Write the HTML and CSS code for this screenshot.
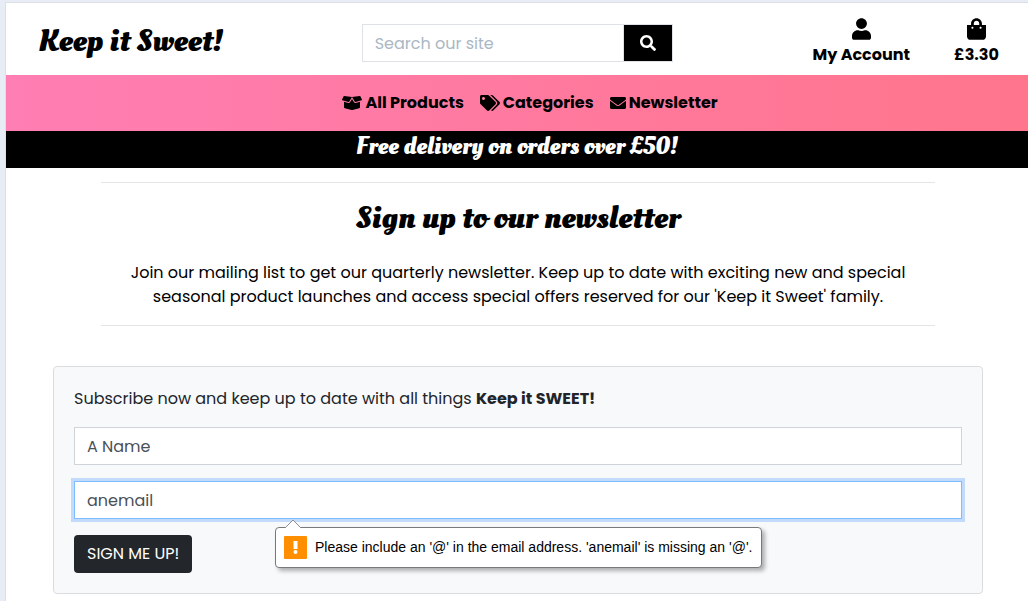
FILE: index.html
```html
<!DOCTYPE html>
<html lang="en">
<head>
<meta charset="utf-8">
<title>Keep it Sweet! - Newsletter</title>
<link rel="stylesheet" href="styles.css">
</head>
<body>
<div class="page">
  <header class="header">
    <a class="logo" href="#">Keep it Sweet!</a>
    <form class="search" role="search">
      <input class="search-input" type="text" placeholder="Search our site" aria-label="Search our site">
      <button class="search-button" type="button" aria-label="Search">
        <svg class="icon" viewBox="0 0 512 512" width="16" height="16"><path d="M505 442.7L405.3 343c-4.5-4.5-10.6-7-17-7H372c27.6-35.3 44-79.7 44-128C416 93.1 322.9 0 208 0S0 93.1 0 208s93.1 208 208 208c48.3 0 92.7-16.4 128-44v16.3c0 6.4 2.5 12.5 7 17l99.7 99.7c9.4 9.4 24.6 9.4 33.9 0l28.3-28.3c9.4-9.4 9.4-24.6.1-34zM208 336c-70.7 0-128-57.2-128-128 0-70.7 57.2-128 128-128 70.7 0 128 57.2 128 128 0 70.7-57.2 128-128 128z"/></svg>
      </button>
    </form>
    <div class="account">
      <a class="account-link" href="#">
        <svg class="icon" viewBox="0 0 448 512" width="19" height="22"><path d="M224 256c70.7 0 128-57.3 128-128S294.7 0 224 0 96 57.3 96 128s57.3 128 128 128zm89.6 32h-16.7c-22.2 10.2-46.9 16-72.9 16s-50.6-5.8-72.9-16h-16.7C60.2 288 0 348.2 0 422.4V464c0 26.5 21.5 48 48 48h352c26.5 0 48-21.5 48-48v-41.6c0-74.2-60.2-134.4-134.4-134.4z"/></svg>
        <span>My Account</span>
      </a>
      <a class="account-link" href="#">
        <svg class="icon" viewBox="0 0 448 512" width="19" height="22"><path d="M352 160v-32C352 57.42 294.579 0 224 0 153.42 0 96 57.42 96 128v32H0v272c0 44.183 35.817 80 80 80h288c44.183 0 80-35.817 80-80V160h-96zm-192-32c0-35.29 28.71-64 64-64s64 28.71 64 64v32H160v-32zm160 120c-13.255 0-24-10.745-24-24s10.745-24 24-24 24 10.745 24 24-10.745 24-24 24zm-192 0c-13.255 0-24-10.745-24-24s10.745-24 24-24 24 10.745 24 24-10.745 24-24 24z"/></svg>
        <span>£3.30</span>
      </a>
    </div>
  </header>

  <nav class="nav">
    <a class="nav-link" href="#">
      <svg class="icon" viewBox="0 0 640 512" width="20" height="16"><path d="M425.7 256c-16.9 0-32.8-9-41.4-23.4L320 126l-64.2 106.6c-8.7 14.5-24.6 23.5-41.5 23.500-4.500 0-9-.6-13.300-1.900L64 215v178c0 14.700 10 27.500 24.200 31l216.200 54.100c10.200 2.500 20.900 2.500 31 0L551.800 424c14.200-3.600 24.200-16.400 24.200-31V215l-137 39.100c-4.300 1.300-8.800 1.900-13.300 1.900zm212.600-112.200L586.800 41c-3.100-6.200-9.800-9.800-16.700-8.900L320 64l91.700 152.100c3.800 6.300 11.400 9.300 18.500 7.300l197.900-56.500c9.900-2.900 14.700-13.900 10.200-23.100zM53.200 41L1.700 143.800c-4.600 9.200.3 20.200 10.100 23l197.900 56.500c7.100 2 14.700-1 18.500-7.300L320 64 69.800 32.100c-6.900-.8-13.500 2.700-16.600 8.900z"/></svg>
      All Products
    </a>
    <a class="nav-link" href="#">
      <svg class="icon" viewBox="0 0 640 512" width="20" height="16"><path d="M497.941 225.941L286.059 14.059A48 48 0 0 0 252.118 0H48C21.49 0 0 21.49 0 48v204.118a48 48 0 0 0 14.059 33.941l211.882 211.882c18.744 18.745 49.136 18.746 67.882 0l204.118-204.118c18.745-18.745 18.745-49.137 0-67.882zM112 160c-26.51 0-48-21.49-48-48s21.49-48 48-48 48 21.49 48 48-21.49 48-48 48zm513.941 133.823L421.823 497.941c-18.745 18.745-49.137 18.745-67.882 0l-.36-.36L527.64 323.522c16.999-16.999 26.36-39.6 26.36-63.64s-9.362-46.641-26.36-63.64L331.397 0h48.721a48 48 0 0 1 33.941 14.059l211.882 211.882c18.745 18.745 18.745 49.137 0 67.882z"/></svg>
      Categories
    </a>
    <a class="nav-link" href="#">
      <svg class="icon" viewBox="0 0 512 512" width="16" height="16"><path d="M502.3 190.8c3.9-3.1 9.7-.2 9.7 4.7V400c0 26.5-21.5 48-48 48H48c-26.5 0-48-21.5-48-48V195.6c0-5 5.7-7.8 9.7-4.7 22.4 17.4 52.1 39.5 154.1 113.6 21.1 15.4 56.7 47.8 92.2 47.6 35.7.3 72-32.8 92.3-47.6 102-74.1 131.6-96.3 154-113.7zM256 320c23.2.4 56.6-29.2 73.4-41.4 132.7-96.3 142.8-104.7 173.4-128.7 5.8-4.5 9.2-11.5 9.2-18.9v-19c0-26.5-21.5-48-48-48H48c-26.5 0-48 21.5-48 48v19c0 7.4 3.4 14.3 9.2 18.9 30.6 23.9 40.7 32.4 173.4 128.7 16.8 12.2 50.2 41.8 73.4 41.4z"/></svg>
      Newsletter
    </a>
  </nav>

  <p class="banner">Free delivery on orders over £50!</p>

  <main>
    <section class="intro">
      <h1 class="title">Sign up to our newsletter</h1>
      <p class="lead">Join our mailing list to get our quarterly newsletter. Keep up to date with exciting new and special seasonal product launches and access special offers reserved for our 'Keep it Sweet' family.</p>
    </section>

    <form class="card" novalidate>
      <p class="card-text">Subscribe now and keep up to date with all things <strong>Keep it SWEET!</strong></p>
      <input class="field" type="text" value="A Name" aria-label="Name">
      <div class="email">
        <input class="field field-active" type="email" value="anemail" aria-label="Email" aria-describedby="email-hint">
        <div class="hint" id="email-hint" role="alert">
          <svg class="hint-arrow" viewBox="0 0 16 9" width="16" height="9"><path d="M0 9L8 1l8 8" fill="#fff" stroke="#8b8e92"/></svg>
          <svg class="hint-icon" viewBox="0 0 23 23" width="23" height="23"><rect width="23" height="23" rx="1" fill="#ff8f00"/><path d="M9.500 5h4v8h-4z" fill="#fff"/><circle cx="11.500" cy="16" r="2" fill="#fff"/></svg>
          <span>Please include an '@' in the email address. 'anemail' is missing an '@'.</span>
        </div>
      </div>
      <button class="submit" type="button">SIGN ME UP!</button>
    </form>
  </main>
</div>
</body>
</html>
```
FILE: styles.css
```css
* {
  box-sizing: border-box;
}

body {
  margin: 0;
  padding: 2px 0 0 5px;
  background: #e7ecf5;
  color: #000;
  font-family: Poppins, Inter, sans-serif;
  font-size: 16px;
  line-height: 24px;
}

a {
  color: inherit;
  text-decoration: none;
}

p,
h1 {
  margin: 0;
}

input,
button {
  font: inherit;
}

.icon {
  display: block;
  flex: none;
  fill: currentColor;
}

.page {
  min-height: 599px;
  border: solid #dcdfe5;
  border-width: 1px 0 0 1px;
  background: #fff;
}

.header {
  display: grid;
  grid-template-columns: repeat(3, minmax(0, 1fr));
  align-items: center;
  min-height: 72px;
}

.logo,
.banner,
.title {
  font-family: "Oleo Script", "Liberation Serif", serif;
  font-weight: 700;
}

.logo {
  padding: 4px 0 0 32px;
  font-size: 32px;
  line-height: 40px;
}

.search {
  display: flex;
  margin: 8px 14px 0 15px;
  border: 1px solid #dee2e6;
}

.search-input {
  flex: 1;
  min-width: 0;
  height: 36px;
  padding: 0 12px;
  border: 0;
  border-right: 1px solid #dee2e6;
}

.search-input::placeholder {
  color: #aab7c4;
  opacity: 1;
}

.search-button {
  display: grid;
  flex: none;
  place-items: center;
  width: 48px;
  padding: 0;
  border: 0;
  background: #000;
  color: #fff;
}

.account {
  display: flex;
  justify-content: flex-end;
  gap: 44px;
  padding: 7px 29px 0 0;
  font-weight: 700;
}

.account-link {
  display: flex;
  flex-direction: column;
  align-items: center;
  gap: 3px;
}

.nav {
  display: flex;
  justify-content: center;
  gap: 16px;
  padding: 16px 0 16px 26px;
  background: linear-gradient(to right, #ff7eb3, #ff758c);
  font-weight: 700;
}

.nav-link {
  display: flex;
  align-items: center;
  gap: 3px;
}

.banner {
  padding: 0 0 5px;
  background: #000;
  color: #fff;
  font-size: 24px;
  line-height: 32px;
  text-align: center;
}

.intro {
  margin: 14px 93px 0 95px;
  padding: 16px 20px;
  border: solid #e5e5e5;
  border-width: 1px 0;
  text-align: center;
}

.title {
  margin-bottom: 24px;
  font-size: 32px;
  line-height: 38px;
}

.card {
  display: grid;
  justify-items: start;
  gap: 16px;
  margin: 40px 45px 0 47px;
  padding: 20px;
  border: 1px solid #dadcdf;
  border-radius: 4px;
  background: #f8f9fb;
}

.card-text {
  color: #212529;
}

.field {
  display: block;
  width: 100%;
  height: 38px;
  padding: 6px 12px;
  border: 1px solid #ced4da;
  border-radius: 0;
  background: #fff;
  color: #495057;
}

.field-active {
  border-color: #80bdff;
  box-shadow: 0 0 0 3px #c2dafc;
}

.email {
  position: relative;
  width: 100%;
}

.hint {
  position: absolute;
  top: 46px;
  left: 201px;
  display: flex;
  align-items: center;
  gap: 8px;
  padding: 8px 9px 8px 8px;
  border: 1px solid #77797c;
  border-radius: 4px;
  background: #fff;
  box-shadow: 3px 3px 4px rgba(0, 0, 0, 0.3);
  color: #000;
  font-family: "Liberation Sans", sans-serif;
  font-size: 14px;
  line-height: 23px;
  white-space: nowrap;
}

.hint-arrow {
  position: absolute;
  top: -9px;
  left: 9px;
}

.submit {
  height: 38px;
  padding: 0 13px;
  border: 0;
  border-radius: 4px;
  background: #23272b;
  color: #fff;
}
```
